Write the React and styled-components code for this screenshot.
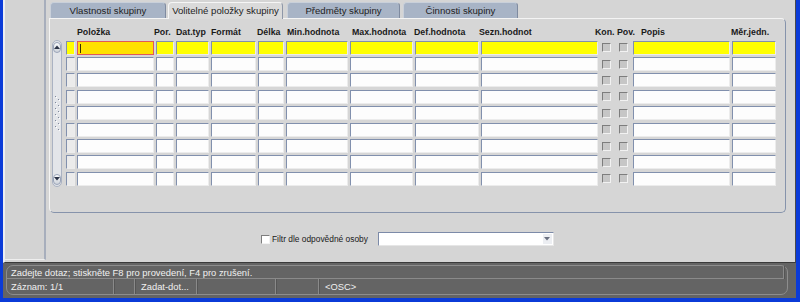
import styled, { createGlobalStyle } from 'styled-components'

const GlobalStyle = createGlobalStyle`
  html, body {
    margin: 0;
    padding: 0;
  }
  body {
    width: 800px;
    height: 302px;
    overflow: hidden;
    background: #0b3bd8;
    font-family: "Liberation Sans", Arial, sans-serif;
  }
`

const columns = [
  { key: 'mark', width: 11, kind: 'mark' },
  { key: 'polozka', label: 'Položka', width: 79, shift: 0 },
  { key: 'por', label: 'Por.', width: 20, shift: -2 },
  { key: 'dattyp', label: 'Dat.typ', width: 35, shift: 0 },
  { key: 'format', label: 'Formát', width: 47, shift: 0 },
  { key: 'delka', label: 'Délka', width: 28, shift: -1 },
  { key: 'min', label: 'Min.hodnota', width: 64, shift: 1 },
  { key: 'max', label: 'Max.hodnota', width: 65, shift: 2 },
  { key: 'def', label: 'Def.hodnota', width: 66, shift: -1 },
  { key: 'sezn', label: 'Sezn.hodnot', width: 119, shift: -2 },
  { key: 'kon', label: 'Kon.', width: 15, shift: -5, kind: 'check' },
  { key: 'pov', label: 'Pov.', width: 18, shift: 2, kind: 'check' },
  { key: 'popis', label: 'Popis', width: 99, shift: 8 },
  { key: 'mer', label: 'Měr.jedn.', width: 46, shift: -1 }
]
const template = columns.map((c) => `${c.width}px`).join(' ')
const ROWS = 9

const tabs = [
  { label: 'Vlastnosti skupiny', width: 116, gap: 0 },
  { label: 'Volitelné položky skupiny', width: 115, gap: 2, active: true },
  { label: 'Předměty skupiny', width: 113, gap: 4 },
  { label: 'Činnosti skupiny', width: 115, gap: 3 }
]

const Window = styled.div`
  box-sizing: border-box;
  width: 800px;
  height: 302px;
  display: flex;
  flex-direction: column;
  background: #646464;
  border-left: 3px solid #0b3bd8;
  border-right: 4px solid #0b3bd8;
  border-bottom: 4px solid #0b3bd8;
`

const Main = styled.div`
  box-sizing: border-box;
  height: 263px;
  display: flex;
  background: #d5d5d5;
  border-left: 2px solid #eceef2;
  border-right: 1px solid #4a4a4a;
  border-bottom: 1px solid #3a3a3a;
`

const LeftPane = styled.div`
  box-sizing: border-box;
  width: 41px;
  height: 260px;
  background: #d3d3d3;
  border-right: 2px solid #a7aebc;
  border-bottom: 1px solid #eeeeee;
`

const Content = styled.div`
  flex: 1;
  display: flex;
  flex-direction: column;
`

const TabRow = styled.div`
  height: 18px;
  padding-left: 4px;
  display: flex;
  align-items: flex-end;
`

const Tab = styled.div`
  box-sizing: border-box;
  width: ${({ $w }) => $w}px;
  margin-left: ${({ $gap }) => $gap}px;
  height: ${({ $active }) => ($active ? 17 : 16)}px;
  margin-bottom: ${({ $active }) => ($active ? -1 : 0)}px;
  border-radius: 4px 4px 0 0;
  background: ${({ $active }) => ($active ? '#dadada' : '#a8b4c6')};
  border: 1px solid ${({ $active }) => ($active ? '#f6f6f6' : '#c9d0da')};
  border-right-color: ${({ $active }) => ($active ? '#8e97a8' : '#7f8ba0')};
  border-bottom: none;
  color: #1e1e1e;
  font-size: 9.6px;
  white-space: nowrap;
  overflow: hidden;
  display: flex;
  align-items: center;
  justify-content: center;
  padding-bottom: 1px;
  position: relative;
  z-index: ${({ $active }) => ($active ? 2 : 1)};
`

const GridBox = styled.div`
  box-sizing: border-box;
  height: 195px;
  margin: 0 9px 0 3px;
  padding-top: 7px;
  border: 1px solid #f4f4f4;
  border-right-color: #8693ab;
  border-bottom-color: #8693ab;
  border-radius: 0 5px 5px 5px;
  background: #d6d6d6;
`

const HeaderRow = styled.div`
  display: grid;
  grid-template-columns: ${template};
  margin-left: 16px;
  height: 12px;
`

const HeaderLabel = styled.div`
  margin-left: ${({ $shift }) => $shift}px;
  font-size: 8.8px;
  font-weight: bold;
  line-height: 12px;
  color: #1a1a1a;
  white-space: nowrap;
`

const Body = styled.div`
  display: flex;
  margin-top: 2.7px;
`

const ScrollTrack = styled.div`
  box-sizing: border-box;
  width: 10px;
  height: 147px;
  margin: -1px 4px 0 2px;
  padding: 1px 0;
  border: 1px solid #aab2c2;
  border-radius: 5px;
  background: #e3e5e9;
  display: flex;
  flex-direction: column;
  justify-content: space-between;
  align-items: center;
`

const ScrollButton = styled.div`
  box-sizing: border-box;
  width: 8px;
  height: 11px;
  border: 1px solid #9aa4b8;
  border-radius: 4px;
  background: linear-gradient(#fbfcfd, #cdd2da);
  display: flex;
  align-items: center;
  justify-content: center;
`

const Rows = styled.div`
  display: grid;
  grid-template-columns: ${template};
  grid-auto-rows: 14px;
  row-gap: 2.4px;
`

const Cell = styled.div`
  box-sizing: border-box;
  margin-right: 2px;
  border-top: 1px solid #8190ad;
  border-left: 1px solid #8190ad;
  border-right: 1px solid #ececec;
  border-bottom: 1px solid #ececec;
  background: ${({ $fill }) => $fill};
`

const ActiveCell = styled.div`
  box-sizing: border-box;
  margin-right: 2px;
  border: 1px solid #e0585a;
  background: #ffe100;
  position: relative;
  &::before {
    content: '';
    position: absolute;
    left: 2px;
    top: 2px;
    width: 1px;
    height: 9px;
    background: #3a3000;
  }
`

const CheckCell = styled.div`
  margin-right: 2px;
  display: flex;
  align-items: center;
  justify-content: center;
`

const Check = styled.div`
  box-sizing: border-box;
  width: 9px;
  height: 9px;
  background: ${({ $light }) => ($light ? '#ffffff' : '#c6c6c6')};
  border-top: 1px solid #7d7d7d;
  border-left: 1px solid #7d7d7d;
  border-right: 1px solid #f2f2f2;
  border-bottom: 1px solid #f2f2f2;
`

const FilterRow = styled.div`
  display: flex;
  align-items: center;
  height: 14px;
  margin-top: 19px;
  padding-left: 215px;
`

const FilterLabel = styled.span`
  margin: 0 10px 0 2px;
  font-size: 8.4px;
  color: #1a1a1a;
  white-space: nowrap;
`

const Combo = styled.div`
  box-sizing: border-box;
  width: 176px;
  height: 14px;
  background: #ffffff;
  border-top: 1px solid #7c8aa8;
  border-left: 1px solid #7c8aa8;
  border-right: 1px solid #e6e6e6;
  border-bottom: 1px solid #e6e6e6;
  display: flex;
  justify-content: flex-end;
  align-items: center;
  padding-right: 1px;
`

const ComboButton = styled.div`
  width: 9px;
  height: 10px;
  background: #eceef2;
  display: flex;
  align-items: center;
  justify-content: center;
`

const StatusBar = styled.div`
  flex: 1;
  box-sizing: border-box;
  padding: 2px 8px 3px 3px;
`

const StatusBox = styled.div`
  box-sizing: border-box;
  height: 100%;
  border: 1px solid #8d8d8d;
  border-radius: 7px;
  display: flex;
  flex-direction: column;
  color: #f0f0f0;
  font-size: 9.4px;
`

const StatusLine = styled.div`
  display: flex;
  height: ${({ $h }) => $h}px;
`

const StatusCell = styled.div`
  box-sizing: border-box;
  width: ${({ $w }) => ($w ? `${$w}px` : 'auto')};
  flex: ${({ $w }) => ($w ? 'none' : 1)};
  padding-left: ${({ $pad }) => $pad || 0}px;
  border-left: ${({ $sep }) => ($sep ? '1px solid #8a8a8a' : 'none')};
  box-shadow: ${({ $sep }) => ($sep ? 'inset 1px 0 #555' : 'none')};
  border-bottom: ${({ $under }) => ($under ? '1px solid #8a8a8a' : 'none')};
  display: flex;
  align-items: center;
  white-space: nowrap;
`

const UpArrow = () => (
  <svg width="6" height="4" viewBox="0 0 6 4">
    <path d="M0 4 L3 0.5 L6 4 Z" fill="#2c3448" />
  </svg>
)

const DownArrow = ({ color = '#2c3448' }) => (
  <svg width="6" height="4" viewBox="0 0 6 4">
    <path d="M0 0 L3 3.5 L6 0 Z" fill={color} />
  </svg>
)

const Grip = () => (
  <svg width="7" height="36" viewBox="0 0 7 36">
    {Array.from({ length: 6 }).map((_, i) => (
      <g key={i}>
        <rect x="1" y={i * 6 + 1} width="1" height="1" fill="#7f889c" />
        <rect x="2" y={i * 6 + 2} width="1" height="1" fill="#ffffff" />
        <rect x="4" y={i * 6 + 4} width="1" height="1" fill="#7f889c" />
        <rect x="5" y={i * 6 + 5} width="1" height="1" fill="#ffffff" />
      </g>
    ))}
  </svg>
)

const TableRow = ({ first }) =>
  columns.map((col) => {
    if (col.kind === 'check') {
      return (
        <CheckCell key={col.key}>
          <Check />
        </CheckCell>
      )
    }
    if (col.kind === 'mark') {
      return <Cell key={col.key} $fill={first ? '#ffff00' : '#ebebeb'} />
    }
    if (first && col.key === 'polozka') return <ActiveCell key={col.key} />
    return <Cell key={col.key} $fill={first ? '#ffff00' : '#fdfdfd'} />
  })

const App = () => (
  <Window>
    <GlobalStyle />
    <Main>
      <LeftPane />
      <Content>
        <TabRow>
          {tabs.map((tab) => (
            <Tab key={tab.label} $w={tab.width} $gap={tab.gap} $active={tab.active}>
              {tab.label}
            </Tab>
          ))}
        </TabRow>
        <GridBox>
          <HeaderRow>
            {columns.map((col) => (
              <HeaderLabel key={col.key} $shift={col.shift || 0}>
                {col.label}
              </HeaderLabel>
            ))}
          </HeaderRow>
          <Body>
            <ScrollTrack>
              <ScrollButton>
                <UpArrow />
              </ScrollButton>
              <Grip />
              <ScrollButton>
                <DownArrow />
              </ScrollButton>
            </ScrollTrack>
            <Rows>
              {Array.from({ length: ROWS }).map((_, i) => (
                <TableRow key={i} first={i === 0} />
              ))}
            </Rows>
          </Body>
        </GridBox>
        <FilterRow>
          <Check $light />
          <FilterLabel>Filtr dle odpovědné osoby</FilterLabel>
          <Combo>
            <ComboButton>
              <DownArrow color="#6a7080" />
            </ComboButton>
          </Combo>
        </FilterRow>
      </Content>
    </Main>
    <StatusBar>
      <StatusBox>
        <StatusLine $h={13}>
          <StatusCell $pad={4} $under>
            Zadejte dotaz; stiskněte F8 pro provedení, F4 pro zrušení.
          </StatusCell>
          <StatusCell $w={4} $sep />
        </StatusLine>
        <StatusLine $h={15}>
          <StatusCell $w={106} $pad={4}>
            Záznam: 1/1
          </StatusCell>
          <StatusCell $w={21} $sep />
          <StatusCell $w={62} $sep $pad={6}>
            Zadat-dot...
          </StatusCell>
          <StatusCell $w={79} $sep />
          <StatusCell $w={43} $sep />
          <StatusCell $sep $pad={6}>
            &lt;OSC&gt;
          </StatusCell>
        </StatusLine>
      </StatusBox>
    </StatusBar>
  </Window>
)

export default App
